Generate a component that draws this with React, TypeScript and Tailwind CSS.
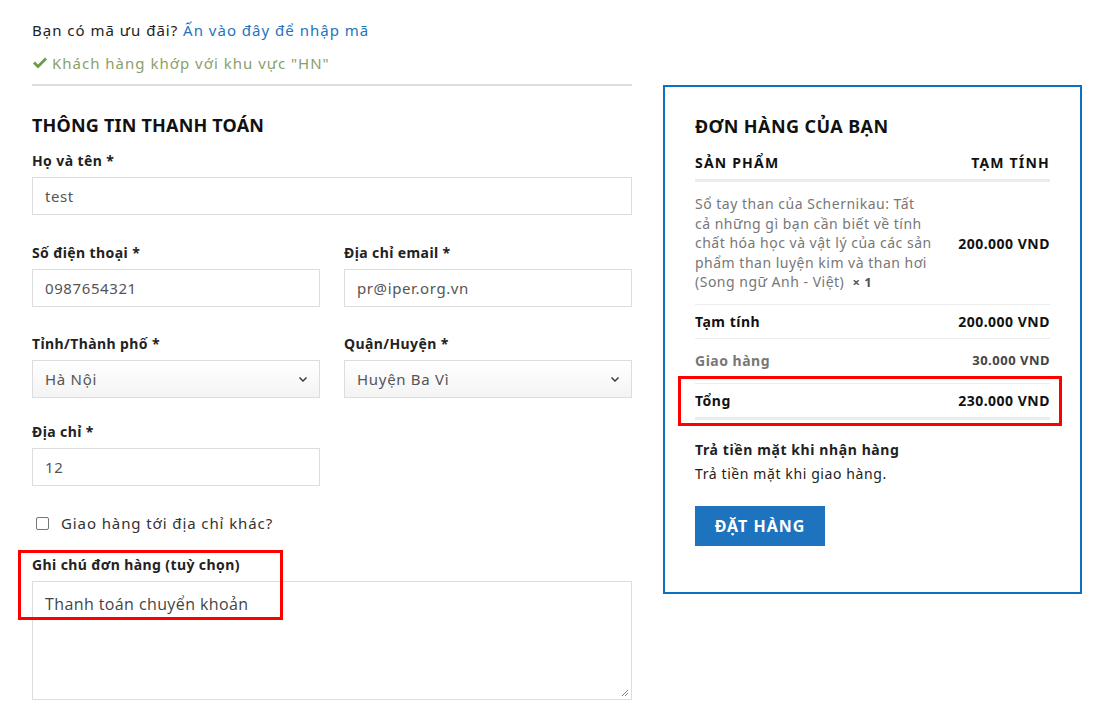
import React from "react";

const font = { fontFamily: '"Noto Sans", "Open Sans", sans-serif' };

function Label({ children, className = "mb-[6px]" }: { children: React.ReactNode; className?: string }) {
  return <div className={`text-[14px] font-bold text-[#222] leading-[20px] tracking-[0.4px] ${className}`}>{children}</div>;
}

function Input({ value }: { value: string }) {
  return (
    <div className="h-[38px] border border-[#ddd] bg-white px-[12px] flex items-center text-[15px] text-[#555] tracking-[0.6px]">
      {value}
    </div>
  );
}

function Select({ value }: { value: string }) {
  return (
    <div className="h-[38px] border border-[#ddd] bg-gradient-to-b from-white to-[#f4f4f4] pl-[12px] pr-[10px] flex items-center justify-between text-[15px] text-[#555] tracking-[0.7px]">
      <span>{value}</span>
      <svg width="12" height="12" viewBox="0 0 12 12" fill="none">
        <path d="M2.5 4.5 6 8l3.5-3.5" stroke="#333" strokeWidth="1.4" />
      </svg>
    </div>
  );
}

export default function App() {
  return (
    <div className="w-[1105px] h-[716px] bg-white overflow-hidden" style={font}>
      <div className="pl-[32px] pt-[18px]">
        <div className="w-[600px]">
          <div className="text-[15px] text-[#222] leading-[24px] tracking-[1px]">
            Bạn có mã ưu đãi? <span className="text-[#1e73be]">Ấn vào đây để nhập mã</span>
          </div>
          <div className="mt-[9px] text-[15px] text-[#8aa06a] leading-[24px] tracking-[1px] flex items-center gap-[4px]">
            <svg width="16" height="14" viewBox="0 0 16 14">
              <path d="M1 7.5 3 5.5 6 8.5 13 1.5 15 3.5 6 12.5Z" fill="#6c9a4a" />
            </svg>
            Khách hàng khớp với khu vực "HN"
          </div>
          <div className="mt-[9px] h-[2px] bg-[#ddd]" />
        </div>
      </div>

      <div className="flex pl-[32px] gap-[31px]">
        <div className="w-[600px] pt-[27px]">
          <div className="text-[18px] font-bold text-[#111] leading-[24px] tracking-[0.2px]">THÔNG TIN THANH TOÁN</div>
          <div className="mt-[14px]">
            <Label>Họ và tên *</Label>
            <Input value="test" />
          </div>
          <div className="mt-[28px] grid grid-cols-2 gap-x-[24px]">
            <div>
              <Label>Số điện thoại *</Label>
              <Input value="0987654321" />
            </div>
            <div>
              <Label>Địa chỉ email *</Label>
              <Input value="pr@iper.org.vn" />
            </div>
          </div>
          <div className="mt-[27px] grid grid-cols-2 gap-x-[24px]">
            <div>
              <Label>Tỉnh/Thành phố *</Label>
              <Select value="Hà Nội" />
            </div>
            <div>
              <Label>Quận/Huyện *</Label>
              <Select value="Huyện Ba Vì" />
            </div>
          </div>
          <div className="mt-[24px] w-[288px]">
            <Label>Địa chỉ *</Label>
            <Input value="12" />
          </div>
          <div className="mt-[25px] flex items-center gap-[12px] pl-[4px] text-[15px] text-[#333] leading-[24px] tracking-[0.9px]">
            <span className="w-[13px] h-[13px] border border-[#767676] rounded-[2px] bg-white" />
            Giao hàng tới địa chỉ khác?
          </div>
          <div className="mt-[20px] relative">
            <div className="absolute left-[-14px] top-[-5px] w-[265px] h-[70px] border-[3px] border-[#f00] pointer-events-none z-10" />
            <Label className="mb-[6px]">Ghi chú đơn hàng (tuỳ chọn)</Label>
            <div
              className="relative h-[119px] border border-[#ddd] px-[12px] pt-[10px] text-[16px] text-[#444] tracking-[0.4px]"
              style={{ fontFamily: '"Open Sans", sans-serif' }}
            >
              Thanh toán chuyển khoản
              <svg className="absolute right-[2px] bottom-[2px]" width="8" height="8" viewBox="0 0 8 8">
                <path d="M7 1 1 7M7 4 4 7" stroke="#888" strokeWidth="1" />
              </svg>
            </div>
          </div>
        </div>

        <div className="w-[419px] mt-[-1px] self-start border-2 border-[#0e71c0] px-[30px] pt-[27px] pb-[46px]">
          <div className="text-[18px] font-bold text-[#111] leading-[24px] tracking-[0.4px]">ĐƠN HÀNG CỦA BẠN</div>
          <div className="mt-[15px] flex justify-between text-[14px] font-bold tracking-[1.2px] text-[#111] leading-[20px] pb-[6px] border-b-[3px] border-[#ececec]">
            <span>SẢN PHẨM</span>
            <span>TẠM TÍNH</span>
          </div>
          <div className="flex justify-between items-center border-b border-[#ececec] pt-[12px] pb-[11px]">
            <div className="text-[14px] leading-[19.5px] text-[#777] tracking-[0.5px] whitespace-nowrap">
              Sổ tay than của Schernikau: Tất
              <br />
              cả những gì bạn cần biết về tính
              <br />
              chất hóa học và vật lý của các sản
              <br />
              phẩm than luyện kim và than hơi
              <br />
              (Song ngữ Anh - Việt) <strong className="text-[#555] font-bold text-[13px] ml-[4px]">× 1</strong>
            </div>
            <span className="text-[14px] font-bold text-[#111] tracking-[0.5px]">200.000 VND</span>
          </div>
          <div className="h-[34px] flex justify-between items-center border-b border-[#ececec] text-[14px] font-bold text-[#111] tracking-[0.5px]">
            <span>Tạm tính</span>
            <span>200.000 VND</span>
          </div>
          <div className="h-[45px] flex justify-between items-center border-b border-[#ececec] font-bold tracking-[0.5px]">
            <span className="text-[14px] text-[#777]">Giao hàng</span>
            <span className="text-[13px] text-[#444]">30.000 VND</span>
          </div>
          <div className="relative">
            <div className="absolute left-[-17px] right-[-12px] top-[-8px] h-[50px] border-[3px] border-[#f00] pointer-events-none" />
            <div className="h-[36px] flex justify-between items-center border-b-[3px] border-[#ececec] text-[14px] font-bold text-[#111] tracking-[0.5px]">
              <span>Tổng</span>
              <span>230.000 VND</span>
            </div>
          </div>
          <div className="mt-[20px] text-[14px] font-bold text-[#222] leading-[20px] tracking-[0.6px]">Trả tiền mặt khi nhận hàng</div>
          <div className="mt-[4px] text-[14px] text-[#222] leading-[20px] tracking-[0.6px]">Trả tiền mặt khi giao hàng.</div>
          <button className="mt-[22px] w-[130px] h-[40px] bg-[#1e73be] text-white text-[16px] font-bold tracking-[1px] block">
            ĐẶT HÀNG
          </button>
        </div>
      </div>
    </div>
  );
}
